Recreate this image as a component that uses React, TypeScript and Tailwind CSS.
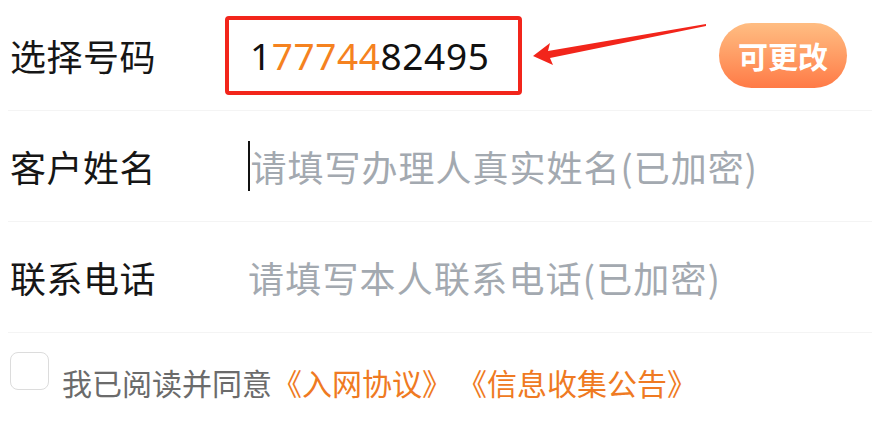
import React from "react";

const cjk = { fontFamily: '"Noto Sans CJK SC", "Noto Sans", sans-serif' };
const num = { fontFamily: '"Noto Sans", "Noto Sans CJK SC", sans-serif' };

export default function App() {
  return (
    <div className="relative w-[886px] h-[430px] bg-white overflow-hidden" style={cjk}>
      <div className="ml-[8px] w-[864px] flex flex-col">
        {/* Row 1 */}
        <div className="relative h-[111px] flex items-center border-b border-[#f4f4f4]">
          <div className="w-[217px] pl-[2px] text-[36px] leading-none tracking-[0.5px] text-[#161616]">选择号码</div>
          <div className="w-[297px] h-[79px] border-[4px] border-[#f2251b] rounded-[4px] flex items-center pl-[21px]">
            <span className="text-[37px] leading-none tracking-[0.6px] text-[#111]" style={num}>
              1<span className="text-[#f5821f]">77744</span>82495
            </span>
          </div>
          <div className="ml-auto mr-[25px] w-[128px] h-[65px] rounded-full bg-gradient-to-b from-[#ffbd82] to-[#ff7a46] flex items-center justify-center text-white text-[30px] font-bold">
            可更改
          </div>
        </div>
        {/* Row 2 */}
        <div className="h-[111px] flex items-center border-b border-[#f4f4f4]">
          <div className="w-[240px] pl-[2px] text-[36px] leading-none tracking-[0.5px] text-[#161616]">客户姓名</div>
          <div className="flex items-center">
            <div className="w-[1.5px] h-[50px] bg-[#111] mr-[1px]" />
            <span className="text-[36px] leading-none tracking-[1px] text-[#a3a9b0]">请填写办理人真实姓名(已加密)</span>
          </div>
        </div>
        {/* Row 3 */}
        <div className="h-[111px] flex items-center border-b border-[#f4f4f4]">
          <div className="w-[240px] pl-[2px] text-[36px] leading-none tracking-[0.5px] text-[#161616]">联系电话</div>
          <span className="text-[36px] leading-none tracking-[1.2px] text-[#a3a9b0]">请填写本人联系电话(已加密)</span>
        </div>
        {/* Agreement */}
        <div className="flex items-start pl-[2px]">
          <div className="mt-[19px] w-[39px] h-[38px] rounded-[8px] border border-[#dcdcdc] bg-white" />
          <div className="mt-[34px] ml-[13px] text-[30px] leading-[30px] text-[#6b6b6b]">
            我已阅读并同意
            <span className="text-[#ef7a22]">《入网协议》</span>
            <span className="ml-[20px] text-[#ef7a22]">《信息收集公告》</span>
          </div>
        </div>
      </div>
      {/* Arrow annotation */}
      <svg className="absolute left-0 top-0" width="886" height="120" viewBox="0 0 886 120">
        <polygon
          points="533,56 550,43 548,51 706,24 706,26 550,58 553,65"
          fill="#f2251b"
        />
      </svg>
    </div>
  );
}
